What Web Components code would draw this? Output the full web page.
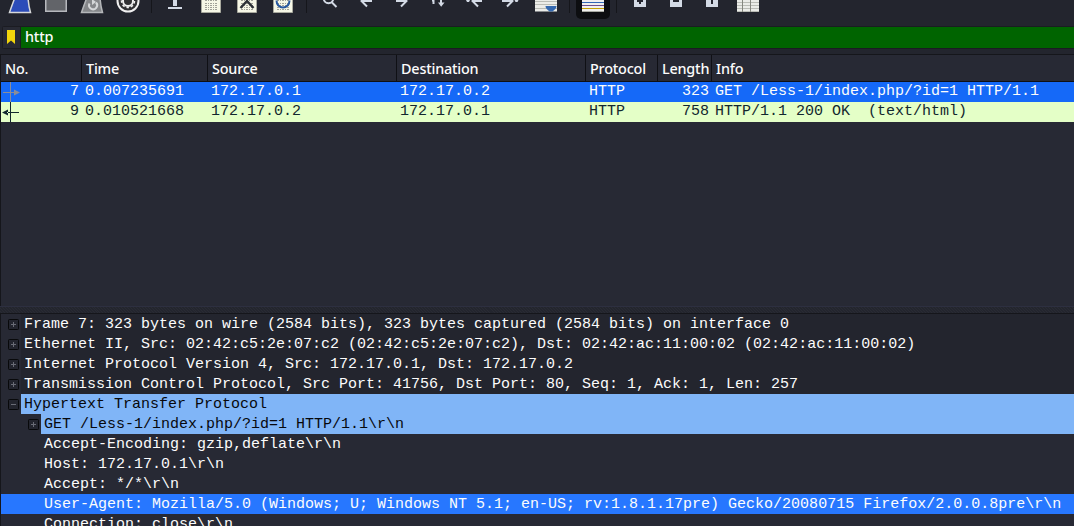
<!DOCTYPE html>
<html lang="en">
<head>
<meta charset="utf-8">
<title>http</title>
<style>
    html, body {
        margin: 0;
        height: 100%;
        overflow: hidden;
        background: #23252e;
    }
</style>
</head>
<body>
<packet-analyzer></packet-analyzer>

<template id="analyzer">
    <style>
        :host {
            display: flex;
            flex-direction: column;
            height: 526px;
            overflow: hidden;
            background: #23252e;
            color: #fcfcfc;
            font: 15px/20px "Liberation Mono", monospace;
            --ui: 500 14.4px/20px "Noto Sans", sans-serif;
            --base: #272934;
            --edge: #15161b;
        }
        .splitter {
            flex: none;
            box-sizing: border-box;
            height: 8px;
            border-top: 1px solid #2d2f40;
            border-bottom: 1px solid var(--edge);
            background: repeating-linear-gradient(45deg, #23252e 0 1.4px, #292b33 1.4px 2.1px);
        }
    </style>
    <tool-bar></tool-bar>
    <filter-bar>http</filter-bar>
    <packet-list></packet-list>
    <div class="splitter"></div>
    <packet-tree>
        <tree-item sign="+" plain>Frame 7: 323 bytes on wire (2584 bits), 323 bytes captured (2584 bits) on interface 0</tree-item>
        <tree-item sign="+" plain>Ethernet II, Src: 02:42:c5:2e:07:c2 (02:42:c5:2e:07:c2), Dst: 02:42:ac:11:00:02 (02:42:ac:11:00:02)</tree-item>
        <tree-item sign="+" plain>Internet Protocol Version 4, Src: 172.17.0.1, Dst: 172.17.0.2</tree-item>
        <tree-item sign="+" plain>Transmission Control Protocol, Src Port: 41756, Dst Port: 80, Seq: 1, Ack: 1, Len: 257</tree-item>
        <tree-item sign="-" match>Hypertext Transfer Protocol</tree-item>
        <tree-item sign="+" match nested>GET /Less-1/index.php/?id=1 HTTP/1.1\r\n</tree-item>
        <tree-item nested>Accept-Encoding: gzip,deflate\r\n</tree-item>
        <tree-item nested>Host: 172.17.0.1\r\n</tree-item>
        <tree-item nested>Accept: */*\r\n</tree-item>
        <tree-item nested selected>User-Agent: Mozilla/5.0 (Windows; U; Windows NT 5.1; en-US; rv:1.8.1.17pre) Gecko/20080715 Firefox/2.0.0.8pre\r\n</tree-item>
        <tree-item nested>Connection: close\r\n</tree-item>
    </packet-tree>
</template>

<template id="toolbar">
    <style>
        :host {
            display: flex;
            flex: none;
            height: 26px;
            padding-left: 2px;
        }
    </style>
    <tool-button icon="start"></tool-button>
    <tool-button icon="stop"></tool-button>
    <tool-button icon="restart"></tool-button>
    <tool-button icon="options"></tool-button>
    <tool-separator></tool-separator>
    <tool-button icon="open"></tool-button>
    <tool-button icon="save"></tool-button>
    <tool-button icon="close"></tool-button>
    <tool-button icon="reload"></tool-button>
    <tool-separator></tool-separator>
    <tool-button icon="find"></tool-button>
    <tool-button icon="back"></tool-button>
    <tool-button icon="forward"></tool-button>
    <tool-button icon="jump"></tool-button>
    <tool-button icon="first"></tool-button>
    <tool-button icon="last"></tool-button>
    <tool-button icon="scroll"></tool-button>
    <tool-separator></tool-separator>
    <tool-button icon="colorize" pressed></tool-button>
    <tool-separator></tool-separator>
    <tool-button icon="zoomin"></tool-button>
    <tool-button icon="zoomout"></tool-button>
    <tool-button icon="normal"></tool-button>
    <tool-button icon="columns"></tool-button>
</template>

<template id="filterbar">
    <style>
        :host {
            display: flex;
            box-sizing: border-box;
            flex: none;
            height: 23px;
            margin: 0 0 5px 2px;
            border: solid #1b1c22;
            border-width: 1px 0 1px 1px;
            border-radius: 3px 0 0 3px;
            font: var(--ui);
            letter-spacing: -.2px;
        }
        svg {
            flex: none;
            width: 17px;
            height: 21px;
            background: #282a34;
            border-right: 1px solid #1b1c22;
        }
        .field {
            flex: 1;
            padding-left: 4px;
            background: #006400;
        }
    </style>
    <svg viewBox="0 0 17 21"><path d="M4 3h8v14l-4-3.5L4 17z" fill="#f2d50c"/></svg>
    <div class="field"><slot></slot></div>
</template>

<template id="packetlist">
    <style>
        :host {
            display: block;
            box-sizing: border-box;
            flex: none;
            height: 252px;
            border: solid var(--edge);
            border-width: 1px 0 0 1px;
            background: var(--base);
        }
        .row {
            display: grid;
            grid-template-columns: 81px 126px 189px 189px 72px 54px 1fr;
            height: 20px;
            line-height: 19px;
            white-space: pre;
        }
        .row > span {
            padding: 0 3px;
        }
        .head {
            box-sizing: border-box;
            height: 27px;
            border-bottom: 1px solid #0f1015;
            font: var(--ui);
            line-height: 27px;
            letter-spacing: -.2px;
        }
        .head > span {
            height: 26px;
            padding: 0 0 0 4px;
            border-right: 1px solid #0f1015;
        }
        .head > span:last-child {
            border: 0;
        }
        .request {
            background: #1569f8;
            color: #fcfcfc;
        }
        .response {
            background: #e4ffc7;
            color: #12272e;
        }
        .no {
            display: flex;
            justify-content: space-between;
        }
        .row > .no {
            padding-left: 0;
        }
        .num {
            text-align: right;
        }
        svg {
            width: 20px;
            height: 20px;
        }
    </style>
    <div class="row head"><span>No.</span><span>Time</span><span>Source</span><span>Destination</span><span>Protocol</span><span>Length</span><span>Info</span></div>
    <div class="row request">
        <span class="no"><svg viewBox="0 0 20 20" fill="#8b8d98"><path d="M9 0h1v20H9zM2 10h12v1H2zM13 7.5l6 3-6 3z"/></svg>7</span><span>0.007235691</span><span>172.17.0.1</span><span>172.17.0.2</span><span>HTTP</span><span class="num">323</span><span>GET /Less-1/index.php/?id=1 HTTP/1.1</span>
    </div>
    <div class="row response">
        <span class="no"><svg viewBox="0 0 20 20" fill="#12272e"><path d="M9 0h1v20H9zM6 10h12v1H6zM7 7.5l-6 3 6 3z"/></svg>9</span><span>0.010521668</span><span>172.17.0.2</span><span>172.17.0.1</span><span>HTTP</span><span class="num">758</span><span>HTTP/1.1 200 OK  (text/html)</span>
    </div>
</template>

<template id="packettree">
    <style>
        :host {
            display: block;
            flex: 1;
            min-height: 0;
            border-left: 1px solid var(--edge);
            background: var(--base);
        }
    </style>
    <slot></slot>
</template>

<template id="treeitem">
    <style>
        :host {
            display: flex;
            height: 20px;
            white-space: pre;
        }
        .branch {
            box-sizing: border-box;
            flex: none;
            width: 20px;
            padding: 5px 0 0 7px;
            white-space: normal;
        }
        :host([nested]) .branch {
            width: 40px;
            padding-left: 27px;
        }
        svg {
            display: block;
        }
        .text {
            flex: 1;
            padding-left: 3px;
            line-height: 21px;
        }
        :host([plain]) .text {
            background: #23252e;
        }
        :host([match]) .text {
            background: #80b5f7;
            color: #07080c;
        }
        :host([selected]) {
            background: #2777ff;
        }
    </style>
    <div class="branch"></div>
    <div class="text"><slot></slot></div>
</template>

<script>
const clone = id => document.getElementById(id).content.cloneNode(true);

// dotted sheet shared by the save, close and reload icons
const sheet = `
    <path d="M8.5-4h19v16.500h-19z" fill="#f6f7e6" stroke="#a9aa9f"/>
    <path d="M12 .5h13M12 3.500h13M12 5.500h13M12 7.500h13M12 9.500h13" stroke="#a0a198" stroke-dasharray="2 1 1 1"/>`;

const icons = {
    start: `<path d="M7.5 12.5C9 8 10.500 4 12 0l1-3h13c.3 6 1.200 11 2.500 15.500z" fill="#2c4cb9" stroke="#d6d8da" stroke-width="1.500"/>`,
    stop: `<path d="M7.750-4h20.500v15.250H7.750z" fill="#626469" stroke="#b6b8bd" stroke-width="1.500"/>`,
    restart: `<path d="M7.500 12.500C9 8 10.500 4 12 0l1-3h13c.3 6 1.200 11 2.500 15.500z" fill="#85878a" stroke="#b5b7ba" stroke-width="1.500"/>
        <path d="M22 2.500a4 4 0 1 1-6.500 1" fill="none" stroke="#d5d7d9" stroke-width="2"/><path d="M18-1v6l4-3z" fill="#d5d7d9"/>`,
    options: `<circle cx="18" cy="1" r="10.500" fill="#303033" stroke="#f0f0f0" stroke-width="2"/>
        <circle cx="18" cy="1" r="5" fill="none" stroke="#f0f0f0" stroke-width="2"/>
        <circle cx="18" cy="1" r="6.500" fill="none" stroke="#f0f0f0" stroke-width="1.500" stroke-dasharray="2.500 2"/>`,
    open: `<path d="M16 0h4v6h-4zM11 7h14v2H11z" fill="#d3dae5"/>`,
    save: sheet,
    close: sheet + `<path d="M11.500 8L18 1l6.500 7" fill="none" stroke="#2d3136" stroke-width="2.400"/>`,
    reload: sheet + `<path d="M11.500 0a6.500 7 0 0 0 13 0" transform="translate(0 .5)" fill="none" stroke="#2859a0" stroke-width="2"/>`,
    find: `<circle cx="16.500" cy="-1.500" r="4.750" fill="none" stroke="#d3dae5" stroke-width="2"/><path d="M19.500 2l5 5" stroke="#d3dae5" stroke-width="2"/>`,
    back: `<path d="M24 1H13M19-4.500L13.500 1l5.500 5.500" fill="none" stroke="#d3dae5" stroke-width="2"/>`,
    forward: `<path d="M12 1h11M17-4.500l5.500 5.500-5.500 5.500" fill="none" stroke="#d3dae5" stroke-width="2"/>`,
    jump: `<path d="M13.500 0v4M21 0v4" stroke="#d3dae5" stroke-width="2"/><path d="M12 0h2v1.500h-2zM18 2.500h6.500L21.200 6.700z" fill="#d3dae5"/>`,
    first: `<path d="M26 1H17M22-4.500L16.500 1l5.500 5.500" fill="none" stroke="#d3dae5" stroke-width="2"/><path d="M10 0h4l-1 2h-2z" fill="#d3dae5"/>`,
    last: `<path d="M10 1h10M15-4.500l5.500 5.500-5.500 5.500" fill="none" stroke="#d3dae5" stroke-width="2"/><path d="M22.500 0h4l-1 2h-2z" fill="#d3dae5"/>`,
    scroll: `<path d="M7 0h22v11.500H7z" fill="#ebece8"/><path d="M7 1.500h22M7 4.500h22M7 8.500h22" stroke="#babcb6"/><path d="M17.500 6h11c0 2.500-2 3.500-4 5.500h-3c-2-2-4-3-4-5.500z" fill="#3468ae"/>`,
    colorize: `<path d="M7 0h22v12H7z" fill="#f0f0ee"/><path d="M7 2.500h22" stroke="#3168b5"/><path d="M7 5.500h22" stroke="#70508b"/><path d="M7 8.500h22" stroke="#c6a000"/><path d="M7 11.500h22" stroke="#a8a9a2"/>`,
    zoomin: `<path d="M12 0h12v7H12z" fill="#d3dae5"/><path d="M15 0h6v2h-2v2h-2V2h-2z" fill="#23252e"/>`,
    zoomout: `<path d="M12 0h12v7H12z" fill="#d3dae5"/><path d="M15 0h6v2h-6z" fill="#23252e"/>`,
    normal: `<path d="M12 0h12v7H12z" fill="#d3dae5"/><path d="M17 0h2v4h-2z" fill="#23252e"/>`,
    columns: `<path d="M7 0h22v12H7z" fill="#ebece8"/><path d="M7 2.500h22M7 5.500h22M7 8.500h22M7 11.500h22" stroke="#babcb6"/><path d="M12.500 0v12M20.500 0v12" stroke="#85877f"/>`
};

class ToolButton extends HTMLElement {
    constructor() {
        super();
        this.attachShadow({mode: 'open'});
    }

    connectedCallback() {
        this.shadowRoot.innerHTML = `
            <style>
                :host {
                    display: block;
                    flex: none;
                    box-sizing: border-box;
                    width: 36px;
                    height: 19px;
                }
                :host([pressed]) {
                    background: #0d0e11;
                    clip-path: inset(0 1px 0 1px round 0 0 5px 5px);
                }
                svg {
                    display: block;
                }
            </style>
            <svg width="36" height="19" viewBox="0 0 36 19">${icons[this.getAttribute('icon')]}</svg>
        `;
    }
}

class ToolSeparator extends HTMLElement {
    constructor() {
        super();
        this.attachShadow({mode: 'open'}).innerHTML = `
            <style>
                :host {
                    display: block;
                    flex: none;
                    width: 1px;
                    height: 13px;
                    margin: 0 5px;
                    background: #15161b;
                }
            </style>
        `;
    }
}

class ToolBar extends HTMLElement {
    constructor() {
        super();
        this.attachShadow({mode: 'open'}).appendChild(clone('toolbar'));
    }
}

class FilterBar extends HTMLElement {
    constructor() {
        super();
        this.attachShadow({mode: 'open'}).appendChild(clone('filterbar'));
    }
}

class PacketList extends HTMLElement {
    constructor() {
        super();
        this.attachShadow({mode: 'open'}).appendChild(clone('packetlist'));
    }
}

class PacketTree extends HTMLElement {
    constructor() {
        super();
        this.attachShadow({mode: 'open'}).appendChild(clone('packettree'));
    }
}

class TreeItem extends HTMLElement {
    constructor() {
        super();
        this.attachShadow({mode: 'open'}).appendChild(clone('treeitem'));
    }

    // The expander is only there for items that have a sign.
    connectedCallback() {
        const sign = this.getAttribute('sign');
        if (!sign) return;
        this.shadowRoot.querySelector('.branch').innerHTML = `
            <svg width="11" height="11" viewBox="0 0 11 11">
                <rect x=".5" y=".5" width="10" height="10" rx="1" fill="#23252e" stroke="#08090b"/>
                <path d="M3 5.500h5${sign === '+' ? 'M5.500 3v5' : ''}" stroke="#696b75"/>
            </svg>
        `;
    }
}

class PacketAnalyzer extends HTMLElement {
    constructor() {
        super();
        this.attachShadow({mode: 'open'}).appendChild(clone('analyzer'));
    }
}

customElements.define('tool-button', ToolButton);
customElements.define('tool-separator', ToolSeparator);
customElements.define('tool-bar', ToolBar);
customElements.define('filter-bar', FilterBar);
customElements.define('packet-list', PacketList);
customElements.define('tree-item', TreeItem);
customElements.define('packet-tree', PacketTree);
customElements.define('packet-analyzer', PacketAnalyzer);
</script>
</body>
</html>
